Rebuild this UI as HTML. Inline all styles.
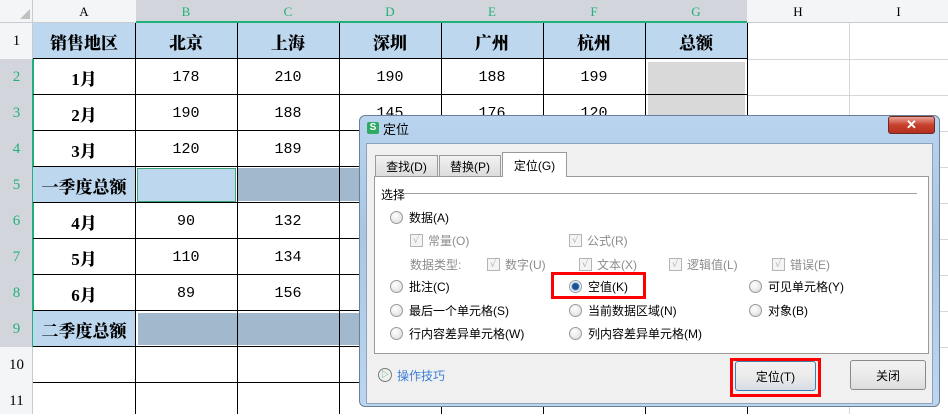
<!DOCTYPE html>
<html><head><meta charset="utf-8"><style>
*{margin:0;padding:0;box-sizing:border-box}
body{width:948px;height:414px;overflow:hidden;background:#fff;position:relative;font-family:"Liberation Serif","Noto Serif CJK SC",serif}
.a{position:absolute}
.t{position:absolute;display:flex;align-items:center;justify-content:center}
.ui{font-family:"Liberation Sans","Noto Sans CJK SC",sans-serif;font-size:12px;color:#000}
.rb{position:absolute;width:13px;height:13px;border-radius:50%;border:1px solid #9a9a9a;background:radial-gradient(circle at 40% 35%,#fff,#d8d8d8)}
.cb{position:absolute;width:13px;height:13px;border:1px solid #b4b4b4;background:#f4f4f4;color:#aaa;font-size:11px;line-height:11px;text-align:center}
.g{color:#8c8c8c}
</style></head><body>
<div class="a" style="left:0;top:0;width:948px;height:23px;background:#f4f5f7;border-bottom:1px solid #c8ccd2"></div>
<div class="a" style="left:136px;top:0;width:611px;height:23px;background:#d2d6dc"></div>
<div class="a" style="left:136px;top:21px;width:611px;height:2px;background:#21b07a"></div>
<div class="a" style="left:0;top:0;width:33px;height:23px;border-right:1px solid #c8ccd2"></div>
<div class="a" style="left:20px;top:9px;width:0;height:0;border-left:10px solid transparent;border-bottom:10px solid #c0c0c0"></div>
<div class="a" style="left:0;top:23px;width:33px;height:391px;background:#f4f5f7;border-right:1px solid #c8ccd2"></div>
<div class="a" style="left:0;top:59px;width:32px;height:288px;background:#d2d6dc"></div>
<div class="a" style="left:32px;top:59px;width:2px;height:288px;background:#21b07a"></div>
<div id="grid"></div>
<script>
var h='';
var cols=[33,135,237,339,441,543,645,747,849,948];
var letters=['A','B','C','D','E','F','G','H','I'];
for(var i=0;i<9;i++){var c=(i>=1&&i<=6)?'#21b07a':'#000';h+='<div class="t" style="left:'+cols[i]+'px;top:0;width:'+(cols[i+1]-cols[i])+'px;height:23px;font-size:13px;color:'+c+'">'+letters[i]+'</div>';}
var rows=[23,59,95,131,167,203,239,275,311,347,383,419];
for(var r=0;r<11;r++){var c=(r>=1&&r<=8)?'#21b07a':'#000';h+='<div class="t" style="left:0;top:'+rows[r]+'px;width:33px;height:'+(rows[r+1]-rows[r])+'px;font-size:15px;color:'+c+'">'+(r+1)+'</div>';}
for(var r=1;r<10;r++){h+='<div class="a" style="left:748px;top:'+rows[r]+'px;width:200px;height:1px;background:#d4d7dc"></div>';}
h+='<div class="a" style="left:849px;top:23px;width:1px;height:391px;background:#d4d7dc"></div>';
h+='<div class="a" style="left:33px;top:23px;width:715px;height:36px;background:#bdd7ee"></div>';
h+='<div class="a" style="left:33px;top:167px;width:103px;height:36px;background:#bdd7ee"></div>';
h+='<div class="a" style="left:33px;top:311px;width:103px;height:36px;background:#bdd7ee"></div>';
h+='<div class="a" style="left:137px;top:168px;width:99px;height:34px;background:#bdd7ee;border:1px solid #3aa57a"></div>';
h+='<div class="a" style="left:238px;top:168px;width:510px;height:33px;background:#a2b8cc"></div>';
h+='<div class="a" style="left:138px;top:313px;width:610px;height:32px;background:#a2b8cc"></div>';
h+='<div class="a" style="left:648px;top:62px;width:97px;height:105px;background:#d9d9d9"></div>';
for(var r=0;r<10;r++){h+='<div class="a" style="left:33px;top:'+(rows[r+1]-1)+'px;width:715px;height:1px;background:#000"></div>';}
for(var i=1;i<8;i++){h+='<div class="a" style="left:'+cols[i]+'px;top:23px;width:1px;height:391px;background:#000"></div>';}
var data=[['销售地区','北京','上海','深圳','广州','杭州','总额'],['1月','178','210','190','188','199',''],['2月','190','188','145','176','120',''],['3月','120','189','','','',''],['一季度总额','','','','','',''],['4月','90','132','','','',''],['5月','110','134','','','',''],['6月','89','156','','','',''],['二季度总额','','','','','','']];
for(var r=0;r<data.length;r++)for(var i=0;i<7;i++){var s=data[r][i];if(!s)continue;var b=(r==0||i==0);h+='<div class="t" style="left:'+cols[i]+'px;top:'+rows[r]+'px;width:'+(cols[i+1]-cols[i])+'px;height:36px;font-size:'+(b?17:15)+'px;font-weight:'+(b?'900':'normal')+';font-family:'+(b?'\'Liberation Serif\',\'Noto Serif CJK SC\',serif':'\'Liberation Mono\',monospace')+'">'+s+'</div>';}
document.getElementById('grid').innerHTML=h;
</script>
<div class="a" style="left:359px;top:115px;width:581px;height:292px;border:1px solid #6b7f96;border-radius:6px;background:linear-gradient(180deg,#b9d4ee 0%,#a9c6e4 40%,#bcd6f0 100%)"></div>
<div class="a" style="left:367px;top:122px;width:12px;height:12px;background:#2eaa62;border-radius:2px;color:#fff;font:bold 10px 'Liberation Sans',sans-serif;text-align:center;line-height:12px">S</div>
<div class="a ui" style="left:383px;top:119px;font-size:13px">定位</div>
<div class="a" style="left:888px;top:116px;width:47px;height:18px;border:1px solid #6e2a22;border-radius:3px;background:linear-gradient(#e8a296,#c8402c 50%,#b23020);color:#fff;font:bold 13px 'Liberation Sans',sans-serif;text-align:center;line-height:16px">✕</div>
<div class="a" style="left:366px;top:143px;width:567px;height:261px;background:#f0f0f0;border:1px solid #8da2bb"></div>
<div class="t ui" style="left:375px;top:155px;width:63px;height:22px;border:1px solid #9a9a9a;background:linear-gradient(#f2f2f2,#dcdcdc)">查找(D)</div>
<div class="t ui" style="left:439px;top:155px;width:62px;height:22px;border:1px solid #9a9a9a;background:linear-gradient(#f2f2f2,#dcdcdc)">替换(P)</div>
<div class="a" style="left:374px;top:176px;width:555px;height:178px;background:#fff;border:1px solid #9a9a9a"></div>
<div class="t ui" style="left:502px;top:152px;width:65px;height:25px;border:1px solid #9a9a9a;border-bottom:none;background:#fff">定位(G)</div>
<div class="a ui" style="left:381px;top:186px">选择</div>
<div class="a" style="left:405px;top:193px;width:512px;height:1px;background:#a0a0a0"></div>
<div class="rb" style="left:390px;top:211px"></div><div class="a ui" style="left:409px;top:209px">数据(A)</div>
<div class="cb" style="left:410px;top:234px">✓</div><div class="a ui g" style="left:428px;top:232px">常量(O)</div>
<div class="cb" style="left:569px;top:234px">✓</div><div class="a ui g" style="left:587px;top:232px">公式(R)</div>
<div class="a ui g" style="left:410px;top:256px">数据类型:</div>
<div class="cb" style="left:487px;top:258px">✓</div><div class="a ui g" style="left:505px;top:256px">数字(U)</div>
<div class="cb" style="left:579px;top:258px">✓</div><div class="a ui g" style="left:597px;top:256px">文本(X)</div>
<div class="cb" style="left:669px;top:258px">✓</div><div class="a ui g" style="left:687px;top:256px">逻辑值(L)</div>
<div class="cb" style="left:772px;top:258px">✓</div><div class="a ui g" style="left:790px;top:256px">错误(E)</div>
<div class="rb" style="left:390px;top:280px"></div><div class="a ui" style="left:409px;top:278px">批注(C)</div>
<div class="rb" style="left:569px;top:280px;background:radial-gradient(circle,#1b4f8f 0 3px,#6aa0d8 3.5px,#fff 5px,#ddd)"></div><div class="a ui" style="left:588px;top:278px">空值(K)</div>
<div class="rb" style="left:749px;top:280px"></div><div class="a ui" style="left:768px;top:278px">可见单元格(Y)</div>
<div class="rb" style="left:390px;top:304px"></div><div class="a ui" style="left:409px;top:302px">最后一个单元格(S)</div>
<div class="rb" style="left:569px;top:304px"></div><div class="a ui" style="left:588px;top:302px">当前数据区域(N)</div>
<div class="rb" style="left:749px;top:304px"></div><div class="a ui" style="left:768px;top:302px">对象(B)</div>
<div class="rb" style="left:390px;top:327px"></div><div class="a ui" style="left:409px;top:325px">行内容差异单元格(W)</div>
<div class="rb" style="left:569px;top:327px"></div><div class="a ui" style="left:588px;top:325px">列内容差异单元格(M)</div>
<div class="a" style="left:551px;top:272px;width:95px;height:27px;border:3px solid #f00"></div>
<div class="a" style="left:378px;top:368px;width:14px;height:14px;border:1px solid #7a7a7a;border-radius:50%;color:#2eaa62;font-size:8px;line-height:12px;text-align:center">▷</div>
<div class="a ui" style="left:397px;top:367px;color:#3c7fd6">操作技巧</div>
<div class="t ui" style="left:735px;top:361px;width:81px;height:30px;border:1px solid #3c7fb1;border-radius:3px;background:linear-gradient(#f2f2f2,#ebebeb 50%,#d6dce4)">定位(T)</div>
<div class="a" style="left:730px;top:358px;width:91px;height:39px;border:3px solid #f00"></div>
<div class="t ui" style="left:850px;top:360px;width:76px;height:30px;border:1px solid #8a8a8a;border-radius:3px;background:linear-gradient(#f2f2f2,#ebebeb 50%,#dcdcdc)">关闭</div>
</body></html>
